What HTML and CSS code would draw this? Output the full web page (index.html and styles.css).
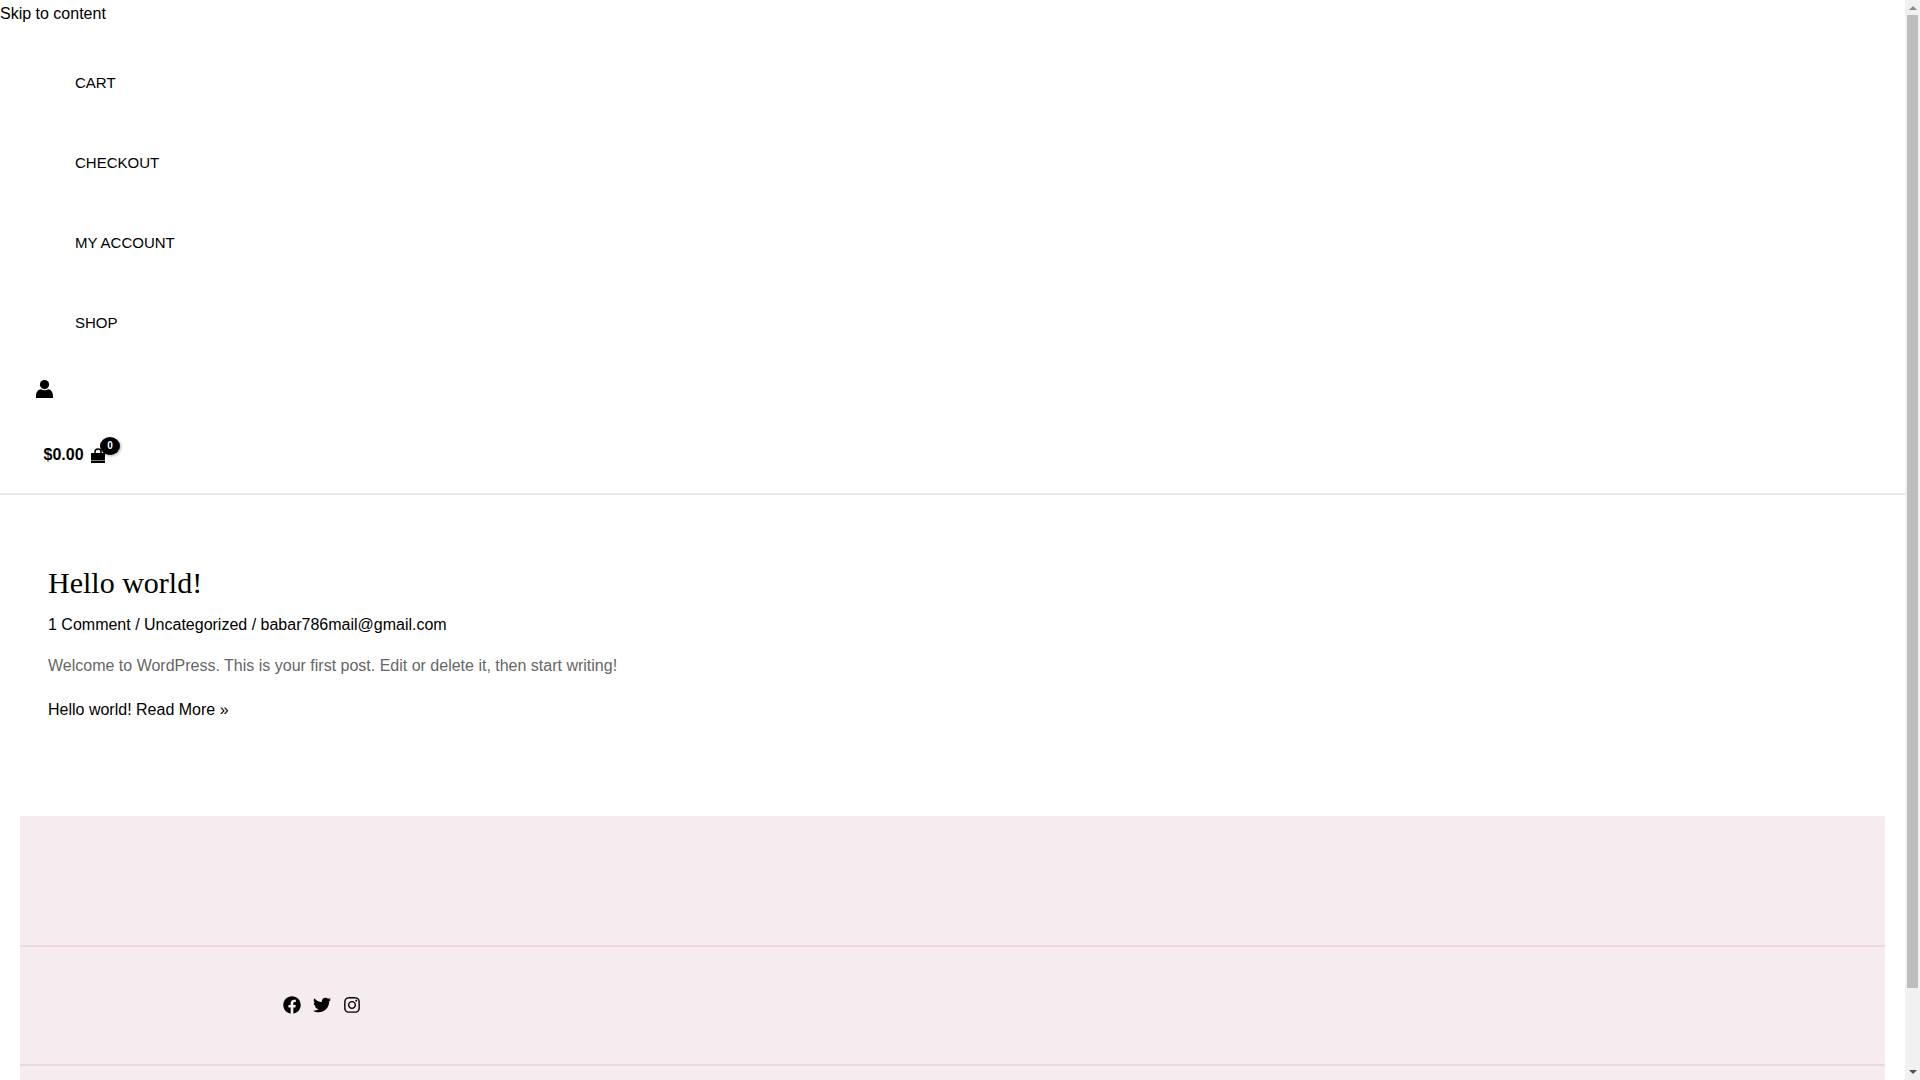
FILE: index.html
```html
<!DOCTYPE html>
<html lang="en">
<head>
    <meta charset="UTF-8">
    <title>Hello world!</title>
    <link rel="stylesheet" href="styles.css">
</head>
<body>
<a class="skip-link" href="#content">Skip to content</a>

<header class="site-header">
    <ul class="main-menu">
        <li><a href="#">CART</a></li>
        <li><a href="#">CHECKOUT</a></li>
        <li><a href="#">MY ACCOUNT</a></li>
        <li><a href="#">SHOP</a></li>
    </ul>
    <div class="account">
        <svg class="icon-user" viewBox="0 0 17 18"><circle cx="8.5" cy="4.6" r="4.6"/><path d="M5 9.2c1 .6 2.2 1 3.5 1s2.500-.4 3.500-1c2.800 0 5 2.800 5 6.800v2H0v-2c0-4 2.200-6.800 5-6.800z"/></svg>
    </div>
    <div class="cart">
        <span class="cart-total">$0.00</span>
        <span class="cart-icon">
            <svg class="icon-bag" viewBox="0 0 14 15"><path class="bag-handle" d="M4 7V4a3 3 0 0 1 6 0v3"/><path d="M0 5h14v10H0z"/><path class="bag-line" d="M0 12.500h14"/></svg>
            <span class="cart-count">0</span>
        </span>
    </div>
</header>

<main id="content" class="site-main">
    <article class="post">
        <h2 class="post-title"><a href="#">Hello world!</a></h2>
        <div class="post-meta"><a href="#">1 Comment</a> / <a href="#">Uncategorized</a> / <a href="#">babar786mail@gmail.com</a></div>
        <p class="post-excerpt">Welcome to WordPress. This is your first post. Edit or delete it, then start writing!</p>
        <a class="read-more" href="#">Hello world! Read More »</a>
    </article>
</main>

<footer class="site-footer">
    <div class="footer-top"></div>
    <div class="footer-social">
        <a href="#"><svg viewBox="0 0 512 512"><path d="M504 256C504 119 393 8 256 8S8 119 8 256c0 123.78 90.69 226.38 209.25 245V327.69h-63V256h63v-54.64c0-62.15 37-96.48 93.67-96.48 27.14 0 55.52 4.84 55.52 4.84v61h-31.28c-30.8 0-40.41 19.12-40.41 38.73V256h68.78l-11 71.69h-57.78V501C413.31 482.38 504 379.78 504 256z"/></svg></a>
        <a href="#"><svg viewBox="0 0 512 512"><path d="M459.37 151.716c.325 4.548.325 9.097.325 13.645 0 138.72-105.583 298.558-298.558 298.558-59.452 0-114.68-17.219-161.137-47.106 8.447.974 16.568 1.299 25.34 1.299 49.055 0 94.213-16.568 130.274-44.832-46.132-.975-84.792-31.188-98.112-72.772 6.498.974 12.995 1.624 19.818 1.624 9.421 0 18.843-1.3 27.614-3.573-48.081-9.747-84.143-51.98-84.143-102.985v-1.299c13.969 7.797 30.214 12.67 47.431 13.319-28.264-18.843-46.781-51.005-46.781-87.391 0-19.492 5.197-37.36 14.294-52.954 51.655 63.675 129.3 105.258 216.365 109.807-1.624-7.797-2.599-15.918-2.599-24.04 0-57.828 46.782-104.934 104.934-104.934 30.213 0 57.502 12.67 76.67 33.137 23.715-4.548 46.456-13.32 66.599-25.34-7.798 24.366-24.366 44.833-46.132 57.827 21.117-2.273 41.584-8.122 60.426-16.243-14.292 20.791-32.161 39.308-52.628 54.253z"/></svg></a>
        <a href="#"><svg viewBox="0 0 448 512"><path d="M224.1 141c-63.6 0-114.9 51.3-114.9 114.9s51.3 114.9 114.9 114.9S339 319.5 339 255.9 287.7 141 224.1 141zm0 189.6c-41.1 0-74.7-33.5-74.7-74.7s33.5-74.7 74.7-74.7 74.7 33.5 74.7 74.7-33.6 74.7-74.7 74.7zm146.4-194.3c0 14.9-12 26.8-26.8 26.8-14.9 0-26.8-12-26.8-26.8s12-26.8 26.8-26.8 26.8 12 26.8 26.8zm76.1 27.2c-1.7-35.9-9.9-67.7-36.2-93.9-26.2-26.2-58-34.4-93.9-36.2-37-2.1-147.9-2.1-184.9 0-35.8 1.7-67.6 9.9-93.9 36.1s-34.4 58-36.2 93.9c-2.1 37-2.1 147.9 0 184.9 1.7 35.9 9.9 67.7 36.2 93.9s58 34.4 93.9 36.2c37 2.1 147.9 2.1 184.9 0 35.9-1.7 67.7-9.9 93.9-36.2 26.2-26.2 34.4-58 36.2-93.9 2.1-37 2.1-147.8 0-184.8zM398.8 388c-7.8 19.6-22.9 34.7-42.6 42.6-29.5 11.7-99.5 9-132.1 9s-102.7 2.6-132.1-9c-19.6-7.8-34.7-22.9-42.6-42.6-11.7-29.5-9-99.5-9-132.1s-2.6-102.7 9-132.1c7.8-19.6 22.9-34.7 42.6-42.6 29.5-11.7 99.5-9 132.1-9s102.7-2.6 132.1 9c19.6 7.8 34.7 22.9 42.6 42.6 11.7 29.5 9 99.5 9 132.1s2.7 102.7-9 132.1z"/></svg></a>
    </div>
    <div class="footer-bottom"></div>
</footer>

<div class="scrollbar">
    <span class="scroll-up"></span>
    <span class="scroll-thumb"></span>
    <span class="scroll-down"></span>
</div>
</body>
</html>
```

FILE: styles.css
```css
body {
    margin: 0 15px 0 0;
    background-color: #fff;
    font-family: 'Liberation Sans', Arial, sans-serif;
    font-size: 16px;
    color: #000;
}

a {
    color: #000;
    text-decoration: none;
}

.skip-link {
    display: block;
    height: 26px;
    line-height: 28px;
}

.site-header {
    padding-top: 17px;
    border-bottom: 2px solid #eaeaea;
}

.main-menu {
    list-style: none;
    margin: 0;
    padding: 0 0 0 40px;
}

.main-menu li a {
    display: block;
    height: 80px;
    line-height: 80px;
    padding-left: 35px;
    font-size: 15px;
}

.account {
    display: flex;
    align-items: center;
    height: 52px;
    margin-bottom: 2px;
    padding-left: 36px;
}

.icon-user {
    width: 17px;
    height: 18px;
}

.cart {
    display: flex;
    align-items: center;
    height: 76px;
    padding-left: 43.5px;
    font-weight: 700;
}

.cart-icon {
    position: relative;
    display: flex;
    margin-left: 7.5px;
}

.icon-bag {
    width: 14px;
    height: 15px;
}

.bag-handle {
    fill: none;
    stroke: #000;
    stroke-width: 1.5;
}

.bag-line {
    stroke: #ddd;
    stroke-width: 0.6;
}

.cart-count {
    position: absolute;
    top: -11px;
    left: 9px;
    width: 20px;
    height: 18px;
    border-radius: 50%;
    background-color: #000;
    color: #fff;
    font-size: 10px;
    line-height: 17px;
    text-align: center;
    box-shadow: 1px 1px 3px rgba(0, 0, 0, 0.3);
}

.site-main {
    padding: 67px 48px 0;
    height: 254px;
}

.post-title {
    margin: 0;
    font-family: 'Liberation Serif', 'Times New Roman', serif;
    font-size: 30px;
    font-weight: 400;
    line-height: 42px;
}

.post-meta {
    margin-top: 8px;
    line-height: 26px;
}

.post-excerpt {
    margin: 15px 0 0;
    color: #666;
    line-height: 26px;
}

.read-more {
    display: block;
    margin-top: 18px;
    line-height: 26px;
}

.site-footer {
    margin: 0 20px;
    background-color: #f6ecef;
}

.footer-top {
    height: 129px;
    border-bottom: 2px solid #eed8df;
}

.footer-social {
    display: flex;
    align-items: center;
    gap: 12px;
    height: 115px;
    padding: 0 0 2px 263px;
    border-bottom: 2px solid #eed8df;
}

.footer-social a {
    display: flex;
}

.footer-social svg {
    width: 18px;
    height: 18px;
}

.footer-bottom {
    height: 100px;
}

/* the window's own scrollbar, drawn over the page */
.scrollbar {
    position: fixed;
    top: 0;
    right: 0;
    bottom: 0;
    display: flex;
    flex-direction: column;
    align-items: center;
    width: 15px;
    background-color: #f1f1f1;
}

.scroll-up {
    width: 0;
    height: 0;
    margin-top: 6px;
    border: 4px solid transparent;
    border-top: 0;
    border-bottom-color: #8a8a8a;
}

.scroll-thumb {
    width: 11px;
    height: 973px;
    margin-top: 5px;
    background-color: #bdbdbd;
}

.scroll-down {
    width: 0;
    height: 0;
    margin-top: auto;
    margin-bottom: 6px;
    border: 4px solid transparent;
    border-bottom: 0;
    border-top-color: #505050;
}
```
